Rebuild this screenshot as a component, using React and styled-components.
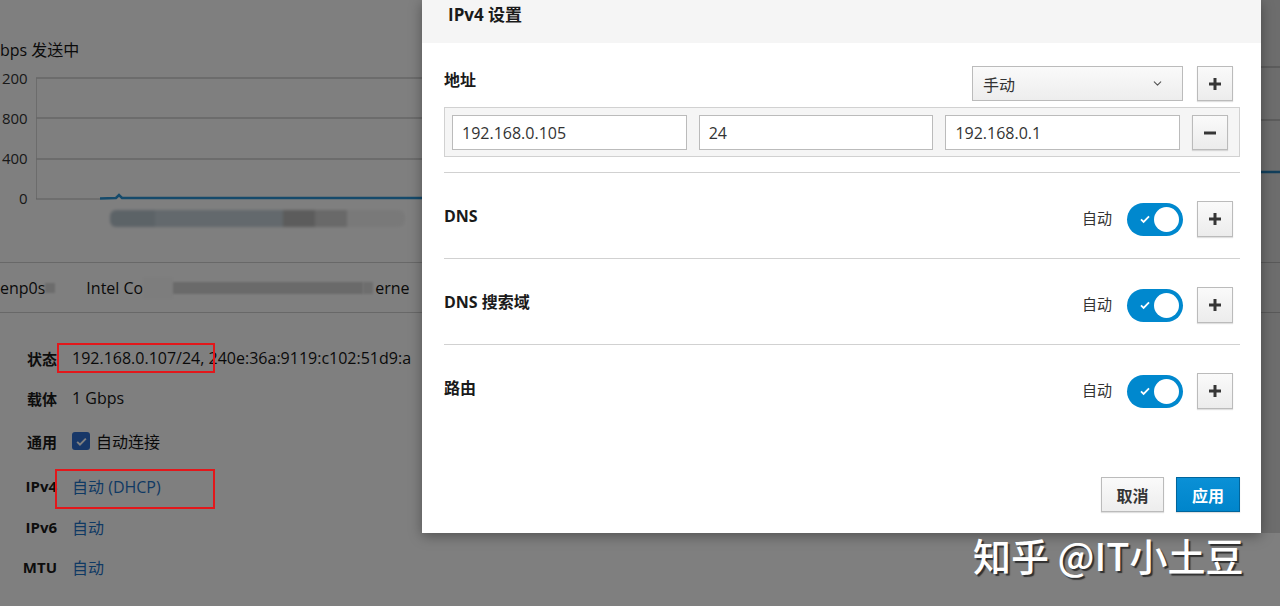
import React from "react";
import styled, { createGlobalStyle } from "styled-components";
import { ChevronDown } from "lucide-react";

const GlobalStyle = createGlobalStyle`
  html, body {
    margin: 0;
    padding: 0;
    background: #fff;
  }
  body {
    font-family: "Open Sans", "Noto Sans CJK SC", sans-serif;
    color: #151515;
  }
`;

const Screen = styled.div`
  position: relative;
  width: 1280px;
  height: 606px;
  overflow: hidden;
  background: #fff;
`;

/* ---------- page behind the modal ---------- */

const Page = styled.div`
  display: flex;
  flex-direction: column;
`;

const Charts = styled.div`
  display: flex;
`;

const ChartColumn = styled.div`
  display: flex;
  flex-direction: column;
  width: ${(p) => p.width}px;
`;

const ChartTitle = styled.div`
  margin-top: 40px;
  font-size: 16px;
  line-height: 20px;
  white-space: nowrap;
`;

const ChartBody = styled.div`
  display: flex;
  margin-top: 8px;
`;

const YAxis = styled.div`
  display: flex;
  flex-direction: column;
  gap: 20px;
  width: 28px;
  font-size: 15px;
  line-height: 20px;
  color: #333;
  text-align: right;
  white-space: nowrap;
`;

const Legend = styled.div`
  display: flex;
  margin: 2px 0 0 110px;
  height: 17px;
  width: 295px;
  filter: blur(1.5px);
  border-radius: 6px;
  overflow: hidden;
`;

const LegendBlock = styled.div`
  width: ${(p) => p.w}px;
  background: ${(p) => p.c};
`;

const IfaceRow = styled.div`
  display: flex;
  align-items: center;
  margin-top: 32px;
  height: 49px;
  border-top: 1px solid #d1d1d1;
  border-bottom: 1px solid #d1d1d1;
  font-size: 16px;
  white-space: nowrap;
`;

const Smudge = styled.span`
  display: inline-block;
  width: ${(p) => p.w}px;
  height: ${(p) => p.h || 12}px;
  margin-left: ${(p) => p.ml || 0}px;
  background: ${(p) => p.c || "#cfcfcf"};
  filter: blur(1.2px);
`;

const IfaceCell = styled.span`
  display: inline-flex;
  align-items: center;
  margin-left: ${(p) => p.ml || 0}px;
`;

const Details = styled.div`
  display: grid;
  grid-template-columns: 57px 1fr;
  grid-template-rows: 40px 40px 46px 44px 38px 42px;
  column-gap: 15px;
  padding-top: 25px;
  align-items: center;
`;

const DLabel = styled.div`
  font-size: 15px;
  font-weight: 700;
  text-align: right;
  color: #1a1a1a;
`;

const DValue = styled.div`
  display: flex;
  align-items: center;
  gap: 6px;
  font-size: 16px;
  white-space: nowrap;
  color: ${(p) => (p.link ? "#1f74c8" : "#151515")};
`;

const Check = styled.span`
  display: inline-flex;
  align-items: center;
  justify-content: center;
  width: 18px;
  height: 18px;
  border-radius: 3px;
  background: #2f6fd0;
`;

const Overlay = styled.div`
  position: absolute;
  inset: 0;
  background: rgba(0, 0, 0, 0.5);
`;

const Annotation = styled.div`
  position: absolute;
  left: ${(p) => p.x}px;
  top: ${(p) => p.y}px;
  width: ${(p) => p.w}px;
  height: ${(p) => p.h}px;
  border: 2px solid #e3171b;
  box-sizing: border-box;
`;

/* ---------- modal ---------- */

const Dialog = styled.div`
  position: absolute;
  left: 422px;
  top: 0;
  width: 839px;
  height: 533px;
  background: #fff;
  display: flex;
  flex-direction: column;
  box-shadow: 0 3px 12px rgba(0, 0, 0, 0.35), 20px 0 0 rgba(0, 0, 0, 0.14);
`;

const Header = styled.div`
  height: 43px;
  background: #f5f5f5;
  padding: 4px 26px 0;
  box-sizing: border-box;
  font-size: 17px;
  font-weight: 700;
  line-height: 22px;
  color: #1a1a1a;
`;

const Body = styled.div`
  display: flex;
  flex-direction: column;
  padding: 0 21px 0 22px;
`;

const SectionHead = styled.div`
  display: flex;
  align-items: flex-start;
  justify-content: space-between;
  margin-top: 23px;
  padding-right: 7px;
  height: 35px;
`;

const SectionLabel = styled.div`
  font-size: 16px;
  font-weight: 700;
  line-height: 20px;
  color: #1a1a1a;
  margin-top: ${(p) => p.mt || 4}px;
`;

const Controls = styled.div`
  display: flex;
  align-items: center;
  gap: ${(p) => p.gap || 14}px;
`;

const Select = styled.div`
  display: flex;
  align-items: center;
  justify-content: space-between;
  width: 211px;
  height: 35px;
  box-sizing: border-box;
  padding: 0 18px 0 10px;
  border: 1px solid #bbb;
  background: linear-gradient(#fafafa, #ededed);
  font-size: 16px;
  color: #333;
`;

const IconButton = styled.div`
  display: flex;
  align-items: center;
  justify-content: center;
  width: 36px;
  height: ${(p) => p.h || 36}px;
  box-sizing: border-box;
  border: 1px solid #bbb;
  background: linear-gradient(#fafafa, #ececec);
  box-shadow: 0 1px 1px rgba(0, 0, 0, 0.12);
`;

const AddressBox = styled.div`
  display: flex;
  gap: 12px;
  margin-top: 6px;
  padding: 7px 11px 6px 7px;
  border: 1px solid #d1d1d1;
  background: #f5f5f5;
`;

const Input = styled.div`
  display: flex;
  align-items: center;
  width: 235px;
  height: 35px;
  box-sizing: border-box;
  padding-left: 9px;
  border: 1px solid #bbb;
  background: #fff;
  font-size: 16px;
  color: #333;
`;

const Setting = styled.div`
  display: flex;
  justify-content: space-between;
  align-items: flex-start;
  height: 86px;
  padding: 28px 7px 0 0;
  box-sizing: border-box;
  border-top: 1px solid #d1d1d1;
  margin-top: ${(p) => p.mt || 0}px;
`;

const Auto = styled.span`
  font-size: 15px;
  color: #333;
  margin-top: -3px;
`;

const Toggle = styled.div`
  display: flex;
  align-items: center;
  justify-content: space-between;
  width: 56px;
  height: 33px;
  box-sizing: border-box;
  padding: 0 4px 0 12px;
  border-radius: 17px;
  background: #0088ce;
`;

const Knob = styled.span`
  width: 25px;
  height: 25px;
  border-radius: 50%;
  background: #fff;
`;

const Footer = styled.div`
  display: flex;
  justify-content: flex-end;
  gap: 12px;
  margin-top: 47px;
`;

const Button = styled.div`
  display: flex;
  align-items: center;
  justify-content: center;
  width: ${(p) => p.w}px;
  height: 35px;
  box-sizing: border-box;
  font-size: 16px;
  font-weight: 700;
  border: 1px solid ${(p) => (p.primary ? "#00659c" : "#bbb")};
  background: ${(p) =>
    p.primary ? "linear-gradient(#0a90d6, #0085cb)" : "linear-gradient(#fafafa, #ededed)"};
  color: ${(p) => (p.primary ? "#fff" : "#363636")};
  box-shadow: 0 1px 1px rgba(0, 0, 0, 0.12);
`;

const Watermark = styled.div`
  position: absolute;
  left: 973px;
  top: 530px;
  font-family: "Noto Sans CJK SC", sans-serif;
  font-size: 38px;
  font-weight: 500;
  line-height: 50px;
  color: #fff;
  white-space: nowrap;
  text-shadow: 2px 2px 1px rgba(40, 40, 40, 0.9);
`;

const Plus = () => (
  <svg width="14" height="14" viewBox="0 0 14 14">
    <path d="M7 1v12M1 7h12" stroke="#363636" strokeWidth="3" />
  </svg>
);

const Minus = () => (
  <svg width="14" height="14" viewBox="0 0 14 14">
    <path d="M1 7h12" stroke="#363636" strokeWidth="3" />
  </svg>
);

const Tick = ({ size = 12 }) => (
  <svg width={size} height={size} viewBox="0 0 12 12">
    <path d="M2 6.3l2.6 2.6L10 3.4" stroke="#fff" strokeWidth="1.8" fill="none" />
  </svg>
);

function SettingRow({ label, mt }) {
  return (
    <Setting mt={mt}>
      <SectionLabel mt={5}>{label}</SectionLabel>
      <Controls>
        <Controls gap={15}>
          <Auto>自动</Auto>
          <Toggle>
            <Tick />
            <Knob />
          </Toggle>
        </Controls>
        <IconButton>
          <Plus />
        </IconButton>
      </Controls>
    </Setting>
  );
}

const details = [
  ["状态", "192.168.0.107/24, 240e:36a:9119:c102:51d9:a"],
  ["载体", "1 Gbps"],
  ["通用", null],
  ["IPv4", "自动 (DHCP)", true],
  ["IPv6", "自动", true],
  ["MTU", "自动", true],
];

export default function App() {
  return (
    <Screen>
      <GlobalStyle />
      <Page>
        <Charts>
          <ChartColumn width={640}>
            <ChartTitle>bps 发送中</ChartTitle>
            <ChartBody>
              <YAxis>
                <span>200</span>
                <span>800</span>
                <span>400</span>
                <span>0</span>
              </YAxis>
              <svg width="612" height="140" style={{ marginLeft: 8 }}>
                <g stroke="#cdcdcd" strokeWidth="1.5">
                  <line x1="0" y1="10" x2="612" y2="10" />
                  <line x1="0" y1="50" x2="612" y2="50" />
                  <line x1="0" y1="91" x2="612" y2="91" />
                  <line x1="0" y1="10" x2="0" y2="131" />
                </g>
                <line x1="0" y1="131" x2="64" y2="131" stroke="#bbb" strokeWidth="1" />
                <path
                  d="M64 130.5 L80 130 L83 127 L86 130 L612 130"
                  stroke="#2a95d6"
                  strokeWidth="2.5"
                  fill="none"
                />
              </svg>
            </ChartBody>
            <Legend>
              <LegendBlock w={45} c="#b9c6cf" />
              <LegendBlock w={128} c="#c6d2da" />
              <LegendBlock w={32} c="#b8b8b8" />
              <LegendBlock w={32} c="#d2d2d2" />
              <LegendBlock w={58} c="#f3f3f3" />
            </Legend>
          </ChartColumn>
          <ChartColumn width={640}>
            <svg width="640" height="230">
              <g stroke="#cdcdcd" strokeWidth="1.5">
                <line x1="0" y1="67" x2="640" y2="67" />
                <line x1="0" y1="120" x2="640" y2="120" />
              </g>
              <line x1="0" y1="172" x2="640" y2="172" stroke="#2a95d6" strokeWidth="2.5" />
            </svg>
          </ChartColumn>
        </Charts>
        <IfaceRow>
          <IfaceCell>enp0s</IfaceCell>
          <Smudge w={10} h={10} c="#d8d8d8" />
          <IfaceCell ml={31}>Intel Co</IfaceCell>
          <Smudge w={30} h={22} c="#fafafa" />
          <Smudge w={190} h={12} c="#d4d4d4" />
          <Smudge w={10} h={12} c="#dcdcdc" />
          <IfaceCell ml={2}>erne</IfaceCell>
        </IfaceRow>
        <Details>
          {details.map(([label, value, link]) => (
            <React.Fragment key={label}>
              <DLabel>{label}</DLabel>
              {value ? (
                <DValue link={link}>{value}</DValue>
              ) : (
                <DValue>
                  <Check>
                    <Tick size={13} />
                  </Check>
                  自动连接
                </DValue>
              )}
            </React.Fragment>
          ))}
        </Details>
      </Page>

      <Overlay />
      <Annotation x={57} y={343} w={158} h={30} />
      <Annotation x={55} y={469} w={160} h={40} />

      <Dialog>
        <Header>IPv4 设置</Header>
        <Body>
          <SectionHead>
            <SectionLabel>地址</SectionLabel>
            <Controls>
              <Select>
                <span>手动</span>
                <ChevronDown size={13} color="#555" strokeWidth={2} />
              </Select>
              <IconButton h={35}>
                <Plus />
              </IconButton>
            </Controls>
          </SectionHead>
          <AddressBox>
            <Input>192.168.0.105</Input>
            <Input>24</Input>
            <Input>192.168.0.1</Input>
            <IconButton h={35}>
              <Minus />
            </IconButton>
          </AddressBox>
          <SettingRow label="DNS" mt={15} />
          <SettingRow label="DNS 搜索域" />
          <SettingRow label="路由" />
          <Footer>
            <Button w={63}>取消</Button>
            <Button w={64} primary>
              应用
            </Button>
          </Footer>
        </Body>
      </Dialog>

      <Watermark>知乎 @IT小土豆</Watermark>
    </Screen>
  );
}
